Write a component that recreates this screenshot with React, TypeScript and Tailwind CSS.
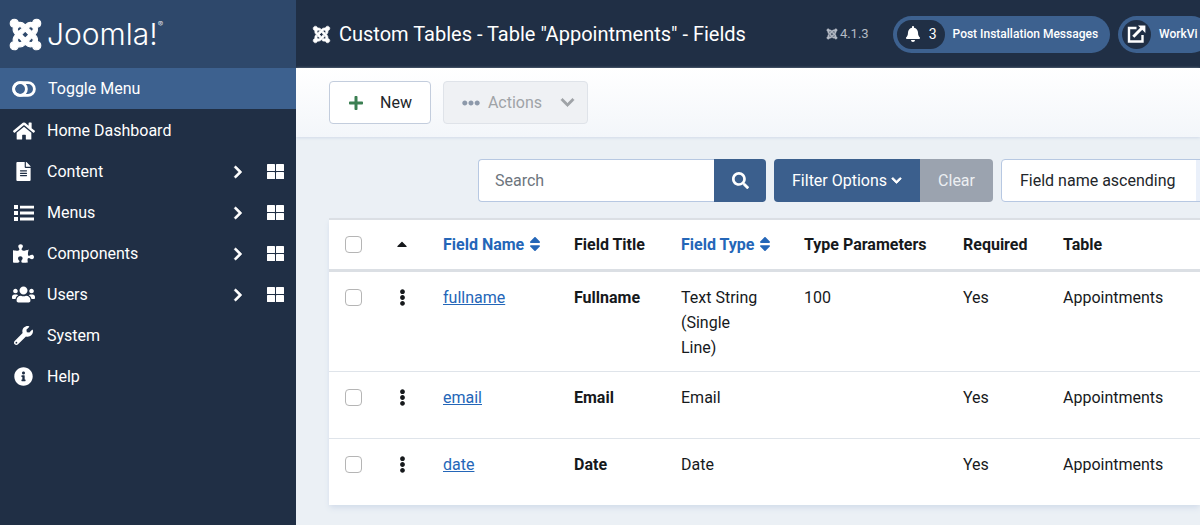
import type { ReactNode } from "react";
import {
  FaBell,
  FaCaretUp,
  FaChevronDown,
  FaChevronRight,
  FaEllipsisH,
  FaEllipsisV,
  FaFileAlt,
  FaHome,
  FaInfoCircle,
  FaJoomla,
  FaPlus,
  FaPuzzlePiece,
  FaSearch,
  FaSort,
  FaUsers,
  FaWrench,
} from "react-icons/fa";

const ListIcon = () => (
  <svg width="20" height="16" viewBox="0 0 20 16" fill="currentColor">
    <path d="M0 0h4v4H0zM0 6h4v4H0zM0 12h4v4H0z" />
    <path d="M6 .7h14v2.8H6zM6 6.6h14v2.8H6zM6 12.6h14v2.8H6z" />
  </svg>
);

const ToggleIcon = () => (
  <svg width="24" height="16" viewBox="0 0 24 16" fill="none" stroke="currentColor" strokeWidth="2.8">
    <rect x="1.6" y="1.6" width="20.8" height="12.8" rx="6.4" />
    <circle cx="8" cy="8" r="6.4" />
  </svg>
);

const DashboardIcon = () => (
  <svg width="17" height="15" viewBox="0 0 17 15" fill="currentColor">
    <rect width="8" height="7" rx="0.6" />
    <rect x="9" width="8" height="7" rx="0.6" />
    <rect y="8" width="8" height="7" rx="0.6" />
    <rect x="9" y="8" width="8" height="7" rx="0.6" />
  </svg>
);

const ExternalIcon = () => (
  <svg width="19" height="18" viewBox="0 0 19 18" fill="none" stroke="currentColor">
    <path d="M9.5 3H2v13.5h13.5V10" strokeWidth="2.4" />
    <path d="M6.3 11.7 15 3" strokeWidth="3" />
    <path d="M11 .6h7.4V8z" fill="currentColor" stroke="none" />
  </svg>
);

const menuItems = [
  { label: "Home Dashboard", icon: <FaHome size={22} />, expandable: false },
  { label: "Content", icon: <FaFileAlt size={19} />, expandable: true },
  { label: "Menus", icon: <ListIcon />, expandable: true },
  { label: "Components", icon: <FaPuzzlePiece size={21} />, expandable: true },
  { label: "Users", icon: <FaUsers size={23} />, expandable: true },
  { label: "System", icon: <FaWrench size={19} />, expandable: false },
  { label: "Help", icon: <FaInfoCircle size={19} />, expandable: false },
];

const fields = [
  { name: "fullname", title: "Fullname", type: "Text String (Single Line)", params: "100" },
  { name: "email", title: "Email", type: "Email", params: "" },
  { name: "date", title: "Date", type: "Date", params: "" },
];

const Sidebar = () => (
  <aside className="w-[296px] shrink-0 bg-[#202f45] text-white">
    <a href="#home" aria-label="Joomla!" className="flex h-[68px] items-center gap-1 bg-[#2e486b] pl-2">
      <FaJoomla size={35} stroke="currentColor" strokeWidth="16" />
      <span className="flex items-start font-[Inter] text-[30px] leading-9 font-light">
        Joomla!
        <span className="text-[8px] leading-4">®</span>
      </span>
    </a>
    <button className="flex h-[41px] w-full items-center gap-3 bg-[#3d618f] pl-3">
      <ToggleIcon />
      Toggle Menu
    </button>
    <nav className="pt-px">
      {menuItems.map((item) => (
        <div key={item.label} className="flex h-[41px] items-center pr-3">
          <a href="#menu" className="flex flex-1 items-center">
            <span className="flex w-[47px] justify-center">{item.icon}</span>
            {item.label}
          </a>
          {item.expandable && (
            <>
              <FaChevronRight size={14} stroke="currentColor" strokeWidth="24" />
              <a href="#dashboard" aria-label={`${item.label} Dashboard`} className="ml-[22px]">
                <DashboardIcon />
              </a>
            </>
          )}
        </div>
      ))}
    </nav>
  </aside>
);

const Header = () => (
  <header className="flex h-[68px] items-center bg-[#202f45] pl-4 whitespace-nowrap text-white">
    <FaJoomla size={19} stroke="currentColor" strokeWidth="16" className="shrink-0" />
    <h1 className="ml-2 text-xl">Custom Tables - Table "Appointments" - Fields</h1>
    <div className="ml-20 flex items-center gap-0.5 text-[13px] text-[#b4bac4]">
      <FaJoomla size={12} stroke="currentColor" strokeWidth="16" />
      4.1.3
    </div>
    <a
      href="#messages"
      className="ml-6 flex h-[37px] shrink-0 items-center gap-2 rounded-full bg-[#3d618f] pr-3 pl-1 text-xs font-medium"
    >
      <span className="flex h-[29px] items-center gap-2 rounded-full bg-[#202f45] px-2 text-sm font-normal">
        <FaBell size={16} />3
      </span>
      Post Installation Messages
    </a>
    <a
      href="#site"
      className="ml-2 flex h-[37px] shrink-0 items-center gap-2 rounded-full bg-[#3d618f] pr-3 pl-1 text-xs font-medium"
    >
      <span className="flex size-[29px] items-center justify-center rounded-full bg-[#202f45]">
        <ExternalIcon />
      </span>
      WorkVi
    </a>
  </header>
);

const Toolbar = () => (
  <div className="flex h-[69px] items-center gap-3 bg-linear-to-b from-white to-[#f3f6fa] pl-[33px] shadow-sm shadow-[#d5deeb]">
    <button className="flex h-[43px] items-center gap-4 rounded border border-[#c3cddd] bg-white px-[18px] text-[#22262a]">
      <FaPlus size={16} className="text-[#3b7f52]" />
      New
    </button>
    <button
      disabled
      className="flex h-[43px] items-center gap-2 rounded border border-[#dfe3e9] bg-[#eff1f4] pr-3 pl-[18px] text-[#9fa3a7]"
    >
      <FaEllipsisH size={18} className="text-[#8d99aa]" />
      Actions
      <FaChevronDown size={15} stroke="currentColor" strokeWidth="24" className="ml-[10px]" />
    </button>
  </div>
);

const Filters = () => (
  <form className="ml-[149px] flex gap-2 whitespace-nowrap">
    <div className="flex">
      <input
        type="text"
        aria-label="Search"
        placeholder="Search"
        className="h-[43px] w-[236px] rounded-l border border-r-0 border-[#b7c8e2] bg-white px-4 placeholder:text-[#6d757d]"
      />
      <button
        type="button"
        aria-label="Search"
        className="flex w-[52px] items-center justify-center rounded-r bg-[#3b5f8d] text-white"
      >
        <FaSearch size={17} />
      </button>
    </div>
    <div className="flex">
      <button type="button" className="flex items-center gap-1 rounded-l bg-[#3b5f8d] px-[18px] text-white">
        Filter Options
        <FaChevronDown size={11} stroke="currentColor" strokeWidth="40" />
      </button>
      <button type="button" className="rounded-r bg-[#9ba3af] px-[18px] text-[#eceff2]">
        Clear
      </button>
    </div>
    <select
      aria-label="Sort table by"
      className="w-[240px] shrink-0 appearance-none rounded border border-[#b7c8e2] bg-linear-to-r from-white from-[194px] to-[#eaf0fa] to-[194px] px-[18px] text-[#22262a]"
    >
      <option>Field name ascending</option>
    </select>
  </form>
);

const Checkbox = ({ label }: { label: string }) => (
  <input
    type="checkbox"
    aria-label={label}
    className="block size-[17px] appearance-none rounded border border-[#b5b5b5] bg-white"
  />
);

const SortLink = ({ children }: { children: ReactNode }) => (
  <a href="#sort" className="flex items-center gap-0.5 text-[#2466b8]">
    {children}
    <FaSort size={18} />
  </a>
);

const FieldsTable = () => (
  <table className="mt-4 w-full table-fixed bg-white text-left leading-[25px] text-[#16191c] shadow-md shadow-[#d5deeb]">
    <colgroup>
      <col className="w-[49px]" />
      <col className="w-[49px]" />
      <col className="w-[131px]" />
      <col className="w-[107px]" />
      <col className="w-[123px]" />
      <col className="w-[159px]" />
      <col className="w-[100px]" />
      <col />
    </colgroup>
    <thead className="border-t-2 border-b-3 border-[#dbdfe4] whitespace-nowrap">
      <tr className="h-[51px] *:pl-4 *:font-bold">
        <th>
          <Checkbox label="Check all" />
        </th>
        <th>
          <a href="#order" aria-label="Ordering" className="flex w-4 justify-center">
            <FaCaretUp size={16} className="shrink-0" />
          </a>
        </th>
        <th>
          <SortLink>Field Name</SortLink>
        </th>
        <th>Field Title</th>
        <th>
          <SortLink>Field Type</SortLink>
        </th>
        <th>Type Parameters</th>
        <th>Required</th>
        <th>Table</th>
      </tr>
    </thead>
    <tbody>
      {fields.map((field) => (
        <tr
          key={field.name}
          className="h-[67px] border-b border-[#dfe4ea] align-top *:pt-[13px] *:pb-[11px] *:pl-4 last:border-b-0"
        >
          <td>
            <span className="flex h-[25px] items-center">
              <Checkbox label={`Select ${field.name}`} />
            </span>
          </td>
          <td>
            <span className="flex h-[25px] w-4 items-center justify-center">
              <FaEllipsisV size={17} className="shrink-0" />
            </span>
          </td>
          <td>
            <a href="#field" className="text-[#2466b8] underline">
              {field.name}
            </a>
          </td>
          <td className="font-bold">{field.title}</td>
          <td className="pr-6">{field.type}</td>
          <td>{field.params}</td>
          <td>Yes</td>
          <td>Appointments</td>
        </tr>
      ))}
    </tbody>
  </table>
);

export default function App() {
  return (
    <div className="flex min-h-screen bg-[#ebf0f5] font-[Roboto,sans-serif] text-base">
      <Sidebar />
      <div className="min-w-0 flex-1 overflow-hidden">
        <Header />
        <Toolbar />
        <main className="pt-[22px] pl-[33px]">
          <Filters />
          <FieldsTable />
        </main>
      </div>
    </div>
  );
}
